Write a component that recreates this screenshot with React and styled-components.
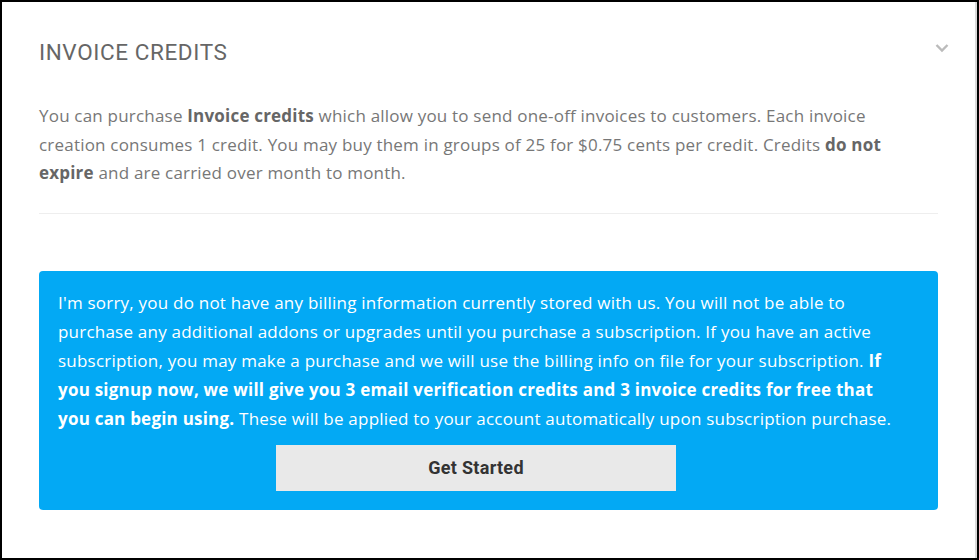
import React from 'react';
import styled, { createGlobalStyle } from 'styled-components';

const GlobalStyle = createGlobalStyle`
  html, body {
    margin: 0;
    padding: 0;
    background: #fff;
  }
  * {
    box-sizing: border-box;
  }
`;

const Frame = styled.div`
  width: 979px;
  height: 560px;
  border: 2px solid #000;
  background: #fff;
  overflow: hidden;
`;

const Panel = styled.section`
  height: 100%;
  border-right: 2px solid #d9d9d9;
  padding: 0 37px 0 37px;
`;

const Header = styled.div`
  display: flex;
  align-items: center;
  justify-content: space-between;
  height: 100px;
  padding-bottom: 1px;
`;

const Title = styled.h2`
  margin: 0;
  font-family: Roboto, "Liberation Sans", sans-serif;
  font-weight: 400;
  font-size: 22.5px;
  color: #666;
  letter-spacing: 0.6px;
`;

const Chevron = styled.span`
  display: flex;
  margin-top: -8px;
  margin-right: -11px;
  color: #bbb;
`;

const Body = styled.p`
  margin: 0;
  padding: 0 20px 25px 0;
  border-bottom: 1px solid #eee;
  font-family: "Open Sans", "Liberation Sans", sans-serif;
  font-size: 17px;
  letter-spacing: 0.2px;
  line-height: 28.5px;
  color: #777;

  b {
    color: #666;
    font-weight: 700;
  }
`;

const Notice = styled.div`
  margin-top: 57px;
  background: #03a9f4;
  border-radius: 4px;
  padding: 17px 42px 19px 19px;
  color: #fff;
  font-family: "Open Sans", "Liberation Sans", sans-serif;
  font-size: 17px;
  letter-spacing: 0.22px;
  line-height: 29px;
`;

const NoticeText = styled.p`
  margin: 0 0 12px;
`;

const ButtonRow = styled.div`
  display: flex;
  justify-content: center;
  padding-right: 2px;
`;

const Button = styled.button`
  width: 400px;
  height: 46px;
  border: none;
  background: #e9e9e9;
  color: #333;
  font-family: Roboto, "Liberation Sans", sans-serif;
  font-weight: 700;
  font-size: 18px;
  letter-spacing: 0.3px;
  cursor: pointer;
`;

const App = () => {
    return (
        <Frame>
            <GlobalStyle />
            <Panel>
                <Header>
                    <Title>INVOICE CREDITS</Title>
                    <Chevron>
                        <svg width="14" height="10" viewBox="0 0 14 10">
                            <path d="M1.5 2 L7 7.5 L12.5 2" fill="none" stroke="currentColor" strokeWidth="2.4" />
                        </svg>
                    </Chevron>
                </Header>
                <Body>
                    You can purchase <b>Invoice credits</b> which allow you to send one-off invoices to customers. Each invoice
                    creation consumes 1 credit. You may buy them in groups of 25 for $0.75 cents per credit. Credits <b>do not
                    expire</b> and are carried over month to month.
                </Body>
                <Notice>
                    <NoticeText>
                        I'm sorry, you do not have any billing information currently stored with us. You will not be able to
                        purchase any additional addons or upgrades until you purchase a subscription. If you have an active
                        subscription, you may make a purchase and we will use the billing info on file for your subscription. <b>If
                        you signup now, we will give you 3 email verification credits and 3 invoice credits for free that
                        you can begin using.</b> These will be applied to your account automatically upon subscription purchase.
                    </NoticeText>
                    <ButtonRow>
                        <Button>Get Started</Button>
                    </ButtonRow>
                </Notice>
            </Panel>
        </Frame>
    );
};

export default App;
